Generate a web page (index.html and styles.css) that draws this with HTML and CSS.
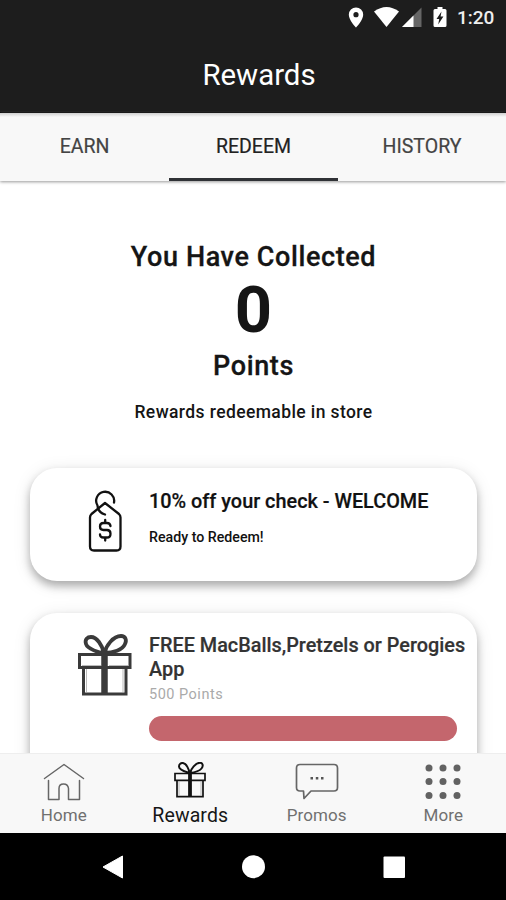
FILE: index.html
```html
<!DOCTYPE html>
<html lang="en">
<head>
<meta charset="utf-8">
<meta name="viewport" content="width=device-width, initial-scale=1">
<title>Rewards</title>
<link rel="stylesheet" href="styles.css">
</head>
<body>
<div class="phone">
  <div class="status">
    <svg class="status-icons" width="104" height="24" viewBox="0 0 104 24">
      <path fill="#fff" fill-rule="evenodd" d="M8 1.500a7.200 7.200 0 0 0-7.200 7.200C.8 14 8 21.500 8 21.500s7.200-7.500 7.200-12.800A7.200 7.200 0 0 0 8 1.500zm0 4.600a2.600 2.600 0 1 1 0 5.200 2.600 2.600 0 0 1 0-5.200z"/>
      <path fill="#fff" d="M26 5.500Q38.500-3.500 51 5.500L38.500 21z"/>
      <path fill="#666" d="M73.500 1.500V21H54z"/>
      <path fill="#fff" d="M65.500 9.500V21H54z"/>
      <path fill="#fff" d="M87 3h2.500V1h5V3H97q1.500 0 1.500 1.500V19.500q0 1.500-1.500 1.500H87q-1.500 0-1.500-1.500V4.500Q85.500 3 87 3z"/>
      <path fill="#1d1d1d" d="M93.500 5.500L88.500 13h2.700l-1 5.500 5.200-8h-2.800z"/>
    </svg>
    <span class="clock">1:20</span>
  </div>
  <header class="title">Rewards</header>
  <nav class="tabs">
    <span class="tab">EARN</span>
    <span class="tab tab-active">REDEEM</span>
    <span class="tab">HISTORY</span>
  </nav>
  <main class="content">
    <section class="balance">
      <div class="collected">You Have Collected</div>
      <div class="count">0</div>
      <div class="points">Points</div>
      <div class="note">Rewards redeemable in store</div>
    </section>
    <article class="card">
      <svg class="card-icon" width="60" height="68" viewBox="0 0 60 68" fill="none" stroke="#111" stroke-width="2.300" stroke-linecap="round" stroke-linejoin="round">
        <path d="M30 14L16.500 25Q15 26.500 15 28.500V57.500Q15 61.500 19 61.500H41.500Q45.500 61.500 45.500 57.500V28.500Q45.500 26.500 44 25z"/>
        <path d="M39 13.500A9 9 0 1 0 22.500 16.500Q23 23.500 30 25.500"/>
        <path stroke-width="2.300" d="M35.500 37Q35 34 32 34H28.500Q25 34 25 37.500 25 41 28.500 41H32Q35.500 41 35.500 44.700 35.500 48.500 32 48.500H28.500Q25 48.500 25 45.500M30.200 31V34M30.200 48.500V51.500"/>
      </svg>
      <div class="card-body">
        <h2 class="offer">10% off your check - WELCOME</h2>
        <p class="ready">Ready to Redeem!</p>
      </div>
    </article>
    <article class="card card-tall">
      <svg class="card-icon gift-icon" width="60" height="68" viewBox="0 0 60 68" fill="none" stroke="#3a3a3a" stroke-width="3">
        <path d="M4.500 23.500H55V36.500H4.500zM8.500 36.500V63H51V36.500"/>
        <path stroke-width="6.500" d="M29.500 22V64"/>
        <path stroke="#bbb" stroke-width="1" d="M7 34.500H26M34 34.500H53M11.500 38V61M48 38V61"/>
        <path stroke-width="3.800" d="M29 22C24.500 22 12.500 18 11 13 9.500 8.500 12.500 6 16 6 22 6 27 14 29 22zM29.500 22C31 15 38 5 46 5 50.500 5 52 9 50 13 47.500 19 38 22 29.500 22z"/>
      </svg>
      <div class="card-body">
        <h2 class="offer offer-locked">FREE MacBalls,Pretzels or Perogies<br>App</h2>
        <p class="cost">500 Points</p>
        <div class="progress"></div>
      </div>
    </article>
  </main>
  <nav class="bottom">
    <div class="item">
      <svg class="item-icon" width="42" height="40" viewBox="0 0 42 40" fill="none" stroke="#666" stroke-width="1.500" stroke-linejoin="round" stroke-linecap="round">
        <path d="M1.500 16.500L21 2.500 40.500 16.500M5.500 18.500V37.500H16V26.500Q16 22 20.500 22T25.500 26.500V37.500H36.500V18.500"/>
      </svg>
      <span class="label">Home</span>
    </div>
    <div class="item item-active">
      <svg class="item-icon" width="42" height="40" viewBox="0 0 42 40" fill="none" stroke="#111" stroke-width="1.700">
        <path d="M6 11.500H36V18.300H6zM8 18.300V34.700H34V18.300"/>
        <path stroke-width="3.800" d="M21 11V35"/>
        <path stroke="#aaa" stroke-width=".8" d="M10 19.500V33.500M32 19.500V33.500"/>
        <path stroke-width="2" d="M20.500 11C17.500 10 10 8.500 10 4.500 10 2 12 .8 14 1 17.500 1.500 20 7.500 20.500 11zM21 11C22 7 26.500 .8 31 .8 34 .8 34.500 4 32.500 6.500 30 9.500 25 10.500 21 11z"/>
      </svg>
      <span class="label">Rewards</span>
    </div>
    <div class="item">
      <svg class="item-icon" width="44" height="40" viewBox="0 0 44 40" fill="none" stroke="#666" stroke-width="1.700" stroke-linejoin="round">
        <path d="M5 2.500H39Q42.500 2.500 42.500 6V25.500Q42.500 29 39 29H16L9 36.500 8.500 29H5Q1.500 29 1.500 25.500V6Q1.500 2.500 5 2.500z"/>
        <path fill="#555" stroke="none" d="M15.500 15h2.500v2.500h-2.500zM20.800 15h2.500v2.500h-2.500zM26 15h2.500v2.500H26z"/>
      </svg>
      <span class="label">Promos</span>
    </div>
    <div class="item">
      <svg class="item-icon" width="42" height="40" viewBox="0 0 42 40" fill="#626262">
        <circle cx="7" cy="6" r="3.500"/><circle cx="21" cy="6" r="3.500"/><circle cx="35" cy="6" r="3.500"/>
        <circle cx="7" cy="19.500" r="3.500"/><circle cx="21" cy="19.500" r="3.500"/><circle cx="35" cy="19.500" r="3.500"/>
        <circle cx="7" cy="33.500" r="3.500"/><circle cx="21" cy="33.500" r="3.500"/><circle cx="35" cy="33.500" r="3.500"/>
      </svg>
      <span class="label">More</span>
    </div>
  </nav>
  <div class="system">
    <svg width="24" height="26" viewBox="0 0 24 26"><path d="M2 13L21.500 2V24z" fill="#fff" stroke="#fff" stroke-linejoin="round"/></svg>
    <svg width="24" height="26" viewBox="0 0 24 26"><circle cx="11.500" cy="12.700" r="11.500" fill="#fff"/></svg>
    <svg width="24" height="26" viewBox="0 0 24 26"><rect x=".5" y="2.500" width="21.500" height="21.500" rx="1" fill="#fff"/></svg>
  </div>
</div>
</body>
</html>
```
FILE: styles.css
```css
* { box-sizing: border-box; }
body { margin: 0; background: #fff; color: #151515; font-family: Roboto, sans-serif; }
h2, p { margin: 0; }
svg { display: block; flex: none; }
.phone { display: flex; flex-direction: column; width: 506px; height: 900px; overflow: hidden; }
.status { display: flex; align-items: center; justify-content: flex-end; flex: none; height: 36px; padding-right: 11px; gap: 5px; background: #1d1d1d; }
.clock { width: 38px; color: #eee; font-size: 19px; line-height: 38px; font-weight: 500; white-space: nowrap; }
.title { flex: none; height: 77px; background: #1d1d1d; border-bottom: 1px solid #000; color: #fff; font-size: 29.400px; line-height: 79px; text-align: center; padding-left: 12px; }
.tabs { display: grid; grid-template-columns: 169px 169px 168px; flex: none; height: 68px; background: linear-gradient(#cfcfcf, #f8f8f8 4px); box-shadow: 0 1px 3px #999; z-index: 1; }
.tab { color: #444; font-size: 19.500px; line-height: 67px; text-align: center; -webkit-text-stroke: .2px; }
.tab-active { height: 68px; color: #222; border-bottom: 3px solid #303236; }
.content { flex: 1; min-height: 0; overflow: hidden; padding: 57px 29px 0 30px; }
.balance { display: flex; flex-direction: column; align-items: center; height: 230px; white-space: nowrap; }
.collected, .points { font-size: 27px; line-height: 38px; font-weight: 500; letter-spacing: .6px; -webkit-text-stroke: .3px; }
.count { font-size: 65px; line-height: 68px; font-weight: 700; }
.points { margin-top: 3px; }
.note { margin-top: 14px; font-size: 17.500px; line-height: 26px; font-weight: 500; letter-spacing: .4px; }
.card { display: flex; width: 447px; height: 113px; padding: 21px 0 0 45px; border-radius: 27px; background: #fff; box-shadow: 0 5px 8px rgba(0,0,0,.28), 0 3px 18px rgba(0,0,0,.1); }
.card-body { margin-left: 14px; padding-top: 1px; white-space: nowrap; }
.offer { font-size: 19.850px; line-height: 24px; font-weight: 500; color: #111; -webkit-text-stroke: .2px; }
.ready { margin-top: 13px; font-size: 14.200px; line-height: 20px; font-weight: 500; color: #111; }
.card-tall { height: 190px; margin-top: 32px; padding-top: 19px; }
.gift-icon { margin-top: -1px; }
.offer-locked { padding-top: 1px; color: #333; }
.cost { margin-top: 4px; color: #aaa; font-size: 14.500px; line-height: 18px; letter-spacing: .5px; }
.progress { width: 308px; height: 25px; margin-top: 12px; border-radius: 13px; background: #c4666d; }
.bottom { display: grid; grid-template-columns: repeat(4, 1fr); flex: none; height: 80px; background: #f8f8f8; border-top: 1px solid #eee; z-index: 1; }
.item { display: flex; flex-direction: column; align-items: center; padding: 8px 0 0 1px; color: #707070; }
.label { margin-top: 1px; font-size: 17px; line-height: 24px; letter-spacing: .1px; }
.item-active { color: #161616; }
.item-active .label { margin-top: 2px; font-size: 19.500px; }
.system { display: flex; align-items: center; justify-content: center; gap: 117px; flex: none; height: 67px; padding-left: 1px; background: #000; }
```
